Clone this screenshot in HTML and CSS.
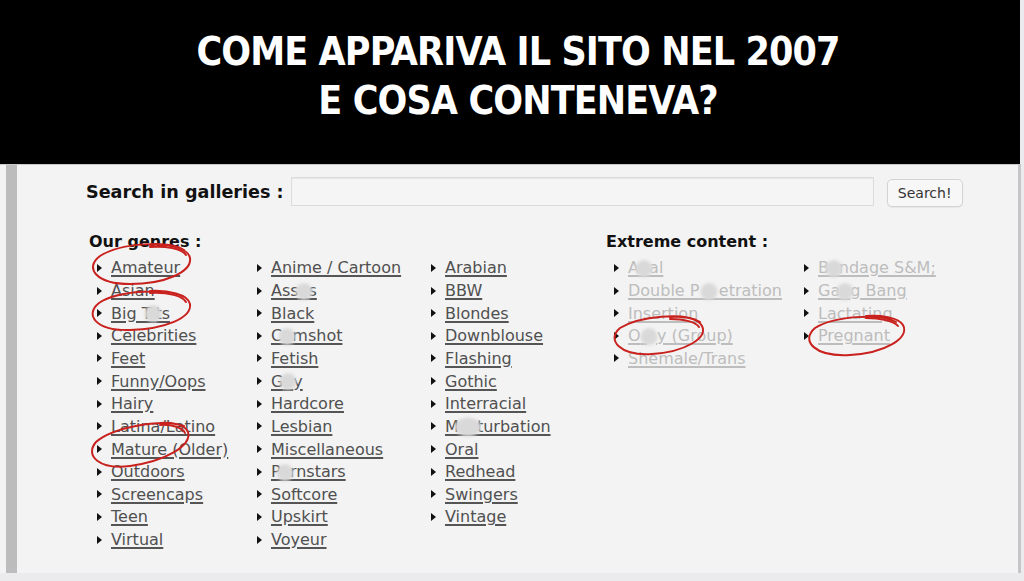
FILE: index.html
```html
<!DOCTYPE html>
<html lang="it">
<head>
<meta charset="utf-8">
<title>Come appariva il sito nel 2007</title>
<link rel="stylesheet" href="styles.css">
</head>
<body>
<header class="banner">
  <h1 class="title">COME APPARIVA IL SITO NEL 2007<br>E COSA CONTENEVA?</h1>
</header>
<div class="content">
  <div class="leftbar"></div>
  <main class="main">
    <form class="search">
      <label class="search-label">Search in galleries :</label>
      <input class="search-input" type="text">
      <button class="search-btn" type="button">Search!</button>
    </form>
    <div class="sections">
      <section class="genres">
        <h2 class="heading">Our genres :</h2>
        <div class="cols cols-genres">
          <ul class="list">
            <li><a href="#">Amateur</a></li>
            <li><a href="#">Asian</a></li>
            <li><a href="#">Big T<span class="blur">i</span>ts</a></li>
            <li><a href="#">Celebrities</a></li>
            <li><a href="#">Feet</a></li>
            <li><a href="#">Funny/Oops</a></li>
            <li><a href="#">Hairy</a></li>
            <li><a href="#">Latina/Latino</a></li>
            <li><a href="#">Mature (Older)</a></li>
            <li><a href="#">Outdoors</a></li>
            <li><a href="#">Screencaps</a></li>
            <li><a href="#">Teen</a></li>
            <li><a href="#">Virtual</a></li>
          </ul>
          <ul class="list">
            <li><a href="#">Anime / Cartoon</a></li>
            <li><a href="#">Ass<span class="blur">e</span>s</a></li>
            <li><a href="#">Black</a></li>
            <li><a href="#">C<span class="blur">u</span>mshot</a></li>
            <li><a href="#">Fetish</a></li>
            <li><a href="#">G<span class="blur">a</span>y</a></li>
            <li><a href="#">Hardcore</a></li>
            <li><a href="#">Lesbian</a></li>
            <li><a href="#">Miscellaneous</a></li>
            <li><a href="#">P<span class="blur">o</span>rnstars</a></li>
            <li><a href="#">Softcore</a></li>
            <li><a href="#">Upskirt</a></li>
            <li><a href="#">Voyeur</a></li>
          </ul>
          <ul class="list">
            <li><a href="#">Arabian</a></li>
            <li><a href="#">BBW</a></li>
            <li><a href="#">Blondes</a></li>
            <li><a href="#">Downblouse</a></li>
            <li><a href="#">Flashing</a></li>
            <li><a href="#">Gothic</a></li>
            <li><a href="#">Interracial</a></li>
            <li><a href="#">M<span class="blur blur-wide">as</span>turbation</a></li>
            <li><a href="#">Oral</a></li>
            <li><a href="#">Redhead</a></li>
            <li><a href="#">Swingers</a></li>
            <li><a href="#">Vintage</a></li>
          </ul>
        </div>
      </section>
      <section class="extreme">
        <h2 class="heading">Extreme content :</h2>
        <div class="cols cols-extreme">
          <ul class="list list-light">
            <li><a href="#">A<span class="blur">n</span>al</a></li>
            <li><a href="#">Double P<span class="blur">en</span>etration</a></li>
            <li><a href="#">Insertion</a></li>
            <li><a href="#">O<span class="blur">rg</span>y (Group)</a></li>
            <li><a href="#">Shemale/Trans</a></li>
          </ul>
          <ul class="list list-light">
            <li><a href="#">B<span class="blur">o</span>ndage S&amp;M;</a></li>
            <li><a href="#">Ga<span class="blur">n</span>g Bang</a></li>
            <li><a href="#">Lactating</a></li>
            <li><a href="#">Pregnant</a></li>
          </ul>
        </div>
      </section>
    </div>
  </main>
</div>
<svg class="marks" width="1024" height="581" viewBox="0 0 1024 581" aria-hidden="true">
  <g fill="none" stroke="#c9211d" stroke-width="2" stroke-linecap="round">
    <path d="M184 250 C 170 240, 120 243, 100 256 C 84 268, 96 284, 130 284 C 165 284, 192 272, 190 258 C 188 248, 170 244, 150 245"/>
    <path d="M150 247 C 165 246, 182 248, 186 255"/>
    <path d="M184 297 C 168 288, 118 290, 99 303 C 84 315, 96 331, 130 330 C 165 329, 192 318, 190 304 C 188 294, 168 290, 150 291"/>
    <path d="M150 293 C 168 292, 183 296, 186 302"/>
    <path d="M184 426 C 160 418, 112 428, 96 442 C 84 456, 100 470, 130 466 C 165 461, 192 446, 188 432 C 185 424, 170 422, 160 423"/>
    <path d="M160 425 C 172 424, 183 428, 185 433"/>
    <path d="M700 322 C 684 312, 640 316, 620 328 C 606 340, 620 356, 652 354 C 685 352, 708 338, 702 326 C 698 318, 682 316, 670 317"/>
    <path d="M670 319 C 684 319, 696 322, 699 327"/>
    <path d="M896 322 C 880 313, 834 316, 815 328 C 800 341, 815 357, 850 355 C 885 353, 910 338, 903 325 C 898 317, 880 315, 866 316"/>
    <path d="M866 318 C 880 318, 894 321, 898 326"/>
  </g>
</svg>
</body>
</html>
```
FILE: styles.css
```css
html, body {
  margin: 0;
  padding: 0;
}
body {
  width: 1024px;
  height: 581px;
  overflow: hidden;
  background: #ebebee;
  position: relative;
  font-family: "DejaVu Sans", Verdana, sans-serif;
}
.banner {
  width: 1020px;
  height: 164px;
  background: #000;
  box-sizing: border-box;
  padding: 27px 0 0 16px;
}
.title {
  margin: 0;
  color: #fff;
  text-align: center;
  font-family: "Liberation Sans Narrow", "DejaVu Sans Condensed", "Liberation Sans", sans-serif;
  font-weight: bold;
  font-size: 39px;
  line-height: 49px;
  letter-spacing: -0.9px;
}
.content {
  display: flex;
  width: 1018px;
  height: 408px;
  background: #f3f3f3;
  border-top: 1px solid #c9c9c9;
  border-right: 3px solid #c6c6c6;
}
.leftbar {
  width: 11px;
  margin-left: 6px;
  background: #bcbcbc;
}
.main {
  flex: 1;
  padding: 12px 0 0 69px;
}
.search {
  display: flex;
  align-items: center;
  height: 29px;
  margin: 0;
}
.search-label {
  font-weight: bold;
  font-size: 17.6px;
  color: #111;
  margin-right: 7px;
}
.search-input {
  width: 583px;
  height: 29px;
  box-sizing: border-box;
  border: 1px solid #dcdcdc;
  background: #f5f5f5;
  box-shadow: inset 0 1px 1px rgba(0,0,0,0.06);
  margin: 0 13px 0 0;
  padding: 0;
}
.search-btn {
  width: 76px;
  height: 28px;
  margin-top: 2px;
  border: 1px solid #d3d3d3;
  border-radius: 5px;
  background: #f7f7f7;
  box-shadow: 0 1px 1px rgba(0,0,0,0.05);
  color: #333;
  font-family: "DejaVu Sans", sans-serif;
  font-size: 14px;
  padding: 0;
}
.sections {
  display: flex;
  margin-top: 26px;
}
.genres {
  width: 517px;
  margin-left: 3px;
}
.heading {
  margin: 0;
  font-size: 16px;
  line-height: 20px;
  font-weight: bold;
  color: #111;
}
.cols {
  display: grid;
  padding-left: 8px;
  margin-top: 4.6px;
}
.cols-genres {
  grid-template-columns: 160px 174px 1fr;
}
.cols-extreme {
  grid-template-columns: 190px 1fr;
}
.list {
  list-style: none;
  margin: 0;
  padding: 0;
}
.list li {
  display: flex;
  align-items: center;
  height: 22.65px;
  font-size: 16px;
}
.list li::before {
  content: "";
  width: 0;
  height: 0;
  border-left: 5px solid #111;
  border-top: 4.5px solid transparent;
  border-bottom: 4.5px solid transparent;
  margin-right: 9px;
  flex: none;
}
.list a {
  color: #505050;
  text-decoration: underline;
  text-decoration-color: #555;
  text-decoration-thickness: 2px;
  text-underline-offset: 2px;
  white-space: nowrap;
}
.list-light a {
  color: #bdbdbd;
  text-decoration-color: #bdbdbd;
}
.blur {
  position: relative;
  color: transparent;
}
.blur::after {
  content: "";
  position: absolute;
  left: 50%;
  top: 50%;
  width: 17px;
  height: 17px;
  transform: translate(-50%, -45%);
  border-radius: 50%;
  background: #d9d9d9;
  filter: blur(1.5px);
}
.blur-wide::after {
  width: 26px;
  height: 19px;
}
.marks {
  position: absolute;
  left: 0;
  top: 0;
  pointer-events: none;
}
```
